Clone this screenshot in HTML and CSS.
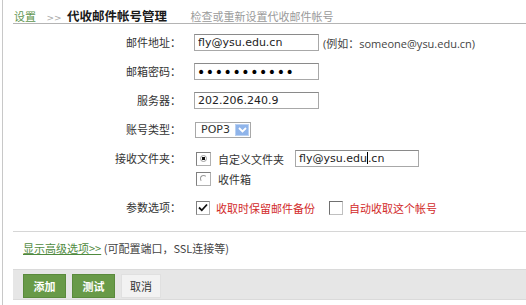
FILE: index.html
```html
<!DOCTYPE html>
<html lang="zh-CN">
<head>
    <meta charset="UTF-8">
    <title>代收邮件帐号管理</title>
    <link rel="stylesheet" href="styles.css">
</head>
<body>
<div class="page">
    <div class="crumbs">
        <a class="crumb-link" href="#">设置</a>
        <span class="crumb-sep">&gt;&gt;</span>
        <span class="crumb-title">代收邮件帐号管理</span>
        <span class="crumb-desc">检查或重新设置代收邮件帐号</span>
    </div>

    <div class="form">
        <label class="label">邮件地址：</label>
        <div class="field">
            <input class="text" type="text" value="fly@ysu.edu.cn">
            <span class="hint">(例如：someone@ysu.edu.cn)</span>
        </div>

        <label class="label">邮箱密码：</label>
        <div class="field">
            <input class="text pass" type="password" value="abcdefghijk">
        </div>

        <label class="label">服务器：</label>
        <div class="field">
            <input class="text" type="text" value="202.206.240.9">
        </div>

        <label class="label">账号类型：</label>
        <div class="field">
            <div class="select">
                <span class="select-value">POP3</span>
                <span class="select-arrow">
                    <svg width="9" height="6" viewBox="0 0 9 6"><path d="M1 1 L4.5 4.5 L8 1" fill="none" stroke="#fff" stroke-width="1.8"/></svg>
                </span>
            </div>
        </div>

        <label class="label">接收文件夹：</label>
        <div class="field stack">
            <div class="line">
                <span class="radio checked"><i></i></span>
                <span class="opt">自定义文件夹</span>
                <div class="text folder">fly@ysu.edu<span class="caret"></span>.cn</div>
            </div>
            <div class="line">
                <span class="radio"><i></i></span>
                <span class="opt">收件箱</span>
            </div>
        </div>

        <label class="label">参数选项：</label>
        <div class="field">
            <span class="check checked">
                <svg width="10" height="9" viewBox="0 0 10 9"><path d="M1 4.5 L3.8 7.3 L9 1.5" fill="none" stroke="#111" stroke-width="1.8"/></svg>
            </span>
            <span class="opt red">收取时保留邮件备份</span>
            <span class="check second"></span>
            <span class="opt red">自动收取这个帐号</span>
        </div>
    </div>

    <div class="more">
        <a class="more-link" href="#">显示高级选项&gt;&gt;</a>
        <span class="more-desc">(可配置端口，SSL连接等)</span>
    </div>

    <div class="actions">
        <button class="btn btn-green">添加</button>
        <button class="btn btn-green">测试</button>
        <button class="btn btn-plain">取消</button>
    </div>
</div>
</body>
</html>
```

FILE: styles.css
```css
body, html {
    margin: 0;
    padding: 0;
    background: #fff;
    font-family: "Open Sans", "Noto Sans CJK SC", sans-serif;
    font-size: 11px;
    color: #333;
}

.page {
    margin-left: 2px;
    border-left: 1px solid #c8c8c8;
    height: 305px;
    padding-left: 10px;
    box-sizing: border-box;
}

/* 顶部导航 */
.crumbs {
    padding: 9px 0 0 1px;
    height: 14px;
    line-height: 14px;
    border-bottom: 1px solid #b4b4b4;
    font-family: "Noto Sans CJK SC", sans-serif;
    white-space: nowrap;
}

.crumb-link {
    color: #5f9650;
    text-decoration: none;
    font-size: 11px;
}

.crumb-sep {
    color: #aaa;
    font-family: "DejaVu Sans", sans-serif;
    font-size: 9px;
    margin: 0 3px 0 8px;
}

.crumb-title {
    font-size: 12.5px;
    font-weight: bold;
    color: #1a1a1a;
    margin-right: 21px;
}

.crumb-desc {
    color: #9a9a9a;
    font-size: 11px;
}

/* 表单 */
.form {
    display: grid;
    grid-template-columns: 168px 1fr;
    column-gap: 13px;
    row-gap: 12px;
    margin-top: 10px;
}

.label {
    text-align: right;
    line-height: 17px;
    font-family: "Noto Sans CJK SC", sans-serif;
    color: #333;
}

.field {
    display: flex;
    align-items: center;
    min-height: 17px;
}

.field.stack {
    flex-direction: column;
    align-items: flex-start;
    gap: 3px;
}

.line {
    display: flex;
    align-items: center;
    height: 17px;
}

.text {
    width: 125px;
    height: 17px;
    box-sizing: border-box;
    border: 1px solid #a8a8a8;
    border-top-color: #8a8a8a;
    padding: 0 3px;
    margin: 0;
    font-family: "DejaVu Sans", sans-serif;
    font-size: 11px;
    color: #222;
    background: #fff;
    outline: none;
}

.text.pass {
    font-size: 14px;
    letter-spacing: 0.6px;
    color: #000;
    padding-left: 2px;
}

.hint {
    margin-left: 4px;
    color: #444;
}

.select {
    display: flex;
    align-items: center;
    width: 56px;
    height: 16px;
    box-sizing: border-box;
    border: 1px solid #a8a8a8;
    margin-left: 1px;
    padding: 1px;
}

.select-value {
    flex: 1;
    padding-left: 4px;
    color: #333;
    font-family: "DejaVu Sans", sans-serif;
    font-size: 11px;
}

.select-arrow {
    width: 14px;
    height: 12px;
    background: #8fb4ea;
    border: 1px solid #b9d1f3;
    box-sizing: border-box;
    display: flex;
    align-items: center;
    justify-content: center;
}

.radio, .check {
    width: 15px;
    height: 14px;
    box-sizing: border-box;
    border: 1px solid #b0b0b0;
    border-top-color: #808080;
    border-left-color: #808080;
    background: #fff;
    margin-left: 2px;
    display: flex;
    align-items: center;
    justify-content: center;
    flex: none;
}

.radio i {
    width: 7px;
    height: 7px;
    border-radius: 50%;
    border: 1px solid #9a9a9a;
    border-right-color: transparent;
    border-bottom-color: transparent;
    box-sizing: border-box;
}

.radio.checked i {
    border: 1px solid #9a9a9a;
    background: radial-gradient(circle, #111 0 1.6px, transparent 2px);
}

.check {
    width: 14px;
}

.check.second {
    margin-left: 14px;
    border-color: #c0c0c0;
    border-top-color: #707070;
    border-left-color: #707070;
}

.opt {
    margin-left: 7px;
    font-family: "Noto Sans CJK SC", sans-serif;
    color: #333;
    white-space: nowrap;
}

.red {
    color: #d22a2a;
    margin-left: 6px;
}

.folder {
    width: 124px;
    margin-left: 11px;
    line-height: 15px;
    flex: none;
}

.caret {
    display: inline-block;
    width: 1px;
    height: 12px;
    background: #000;
    vertical-align: -2px;
}

/* 高级选项 */
.more {
    margin-top: 15px;
    border-top: 1px solid #d6d6d6;
    padding: 9px 0 0 10px;
    height: 28px;
    line-height: 14px;
    font-family: "Noto Sans CJK SC", sans-serif;
}

.more-link {
    color: #4f8a3e;
    text-decoration: underline;
}

.more-desc {
    color: #444;
}

/* 按钮栏 */
.actions {
    background: #e6e6e6;
    border-top: 1px solid #dadada;
    border-bottom: 1px solid #dadada;
    height: 31px;
    padding: 4px 0 0 10px;
    box-sizing: border-box;
    display: flex;
    gap: 6px;
    align-items: flex-start;
}

.btn {
    height: 24px;
    padding: 0;
    font-family: "Noto Sans CJK SC", sans-serif;
    font-size: 11px;
    cursor: pointer;
}

.btn-green {
    width: 43px;
    background: #689a48;
    border: 1px solid #5a8a3c;
    color: #fff;
    font-weight: bold;
}

.btn-plain {
    width: 40px;
    background: #f2f2f2;
    border: 1px solid #e0e0e0;
    color: #333;
}
```
